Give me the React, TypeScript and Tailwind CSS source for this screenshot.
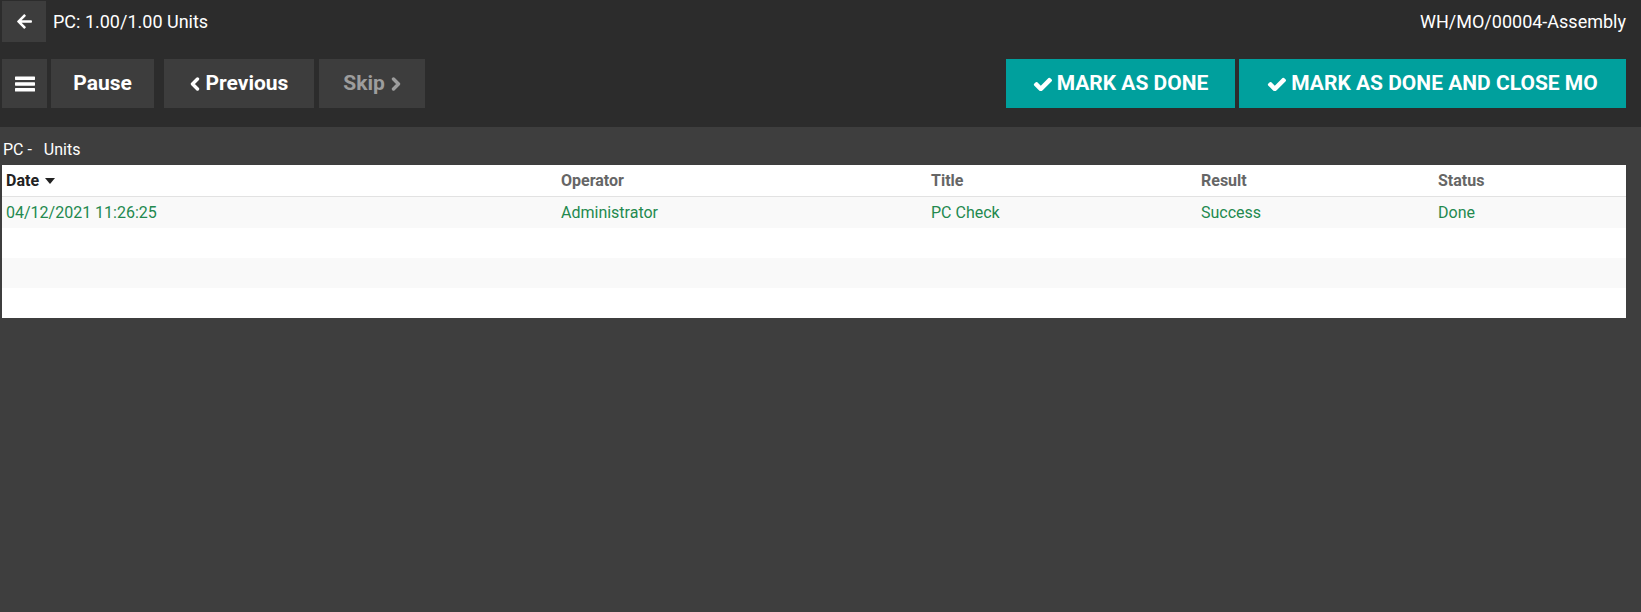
import { FaArrowLeft } from 'react-icons/fa';

const rows = [
  { date: '04/12/2021 11:26:25', operator: 'Administrator', title: 'PC Check', result: 'Success', status: 'Done' },
  null,
  null,
  null,
];

function Bars() {
  return (
    <svg width="20" height="16" viewBox="0 0 20 16" fill="currentColor">
      <rect x="0" y="0.5" width="20" height="3.4" rx="0.6" />
      <rect x="0" y="6.3" width="20" height="3.4" rx="0.6" />
      <rect x="0" y="12.1" width="20" height="3.4" rx="0.6" />
    </svg>
  );
}

// thick FA4-like chevrons
function Chevron({ dir }: { dir: 'left' | 'right' }) {
  return (
    <svg width="10" height="14" viewBox="0 0 10 14" fill="none" stroke="currentColor" strokeWidth="3.4" strokeLinecap="round" strokeLinejoin="round">
      {dir === 'left' ? <path d="M7.5 2L2.5 7l5 5" /> : <path d="M2.5 2l5 5-5 5" />}
    </svg>
  );
}

function Check() {
  return (
    <svg width="19" height="14" viewBox="49 300 1622 1150" fill="currentColor">
      <path d="M1671 566q0 40-28 68l-724 724-136 136q-28 28-68 28t-68-28l-136-136-362-362q-28-28-28-68t28-68l136-136q28-28 68-28t68 28l294 295 656-657q28-28 68-28t68 28l136 136q28 28 28 68z" />
    </svg>
  );
}

const cols = 'grid grid-cols-[555px_370px_270px_237px_1fr]';

export default function App() {
  return (
    <div className="min-h-[612px] bg-[#3e3e3e] font-['Roboto','Liberation_Sans',sans-serif] text-white">
      <div className="h-[127px] bg-[#2c2c2c] pl-[2px] pr-[15px] pt-[1px]">
        <div className="flex h-[41px] items-center justify-between">
          <div className="flex items-center">
            <button className="flex h-[41px] w-[44px] items-center justify-center bg-[#3d3d3d] text-white">
              <FaArrowLeft size={17} />
            </button>
            <span className="ml-[7px] text-[18px] leading-[21px]">PC: 1.00/1.00 Units</span>
          </div>
          <span className="text-[18px] leading-[21px]">WH/MO/00004-Assembly</span>
        </div>

        <div className="mt-[17px] flex h-[49px] items-stretch justify-between">
          <div className="flex items-stretch text-[21px] font-bold">
            <button className="flex w-[45px] items-center justify-center bg-[#3d3d3d]">
              <Bars />
            </button>
            <button className="ml-[4px] flex w-[103px] items-center justify-center bg-[#3d3d3d]">
              Pause
            </button>
            <button className="ml-[10px] flex w-[150px] items-center justify-center gap-[6px] bg-[#3d3d3d]">
              <Chevron dir="left" />
              <span>Previous</span>
            </button>
            <button className="ml-[5px] flex w-[106px] items-center justify-center gap-[6px] bg-[#3d3d3d] text-[#9d9d9d]">
              <span>Skip</span>
              <Chevron dir="right" />
            </button>
          </div>
          <div className="flex items-stretch text-[21px] font-bold">
            <button className="flex w-[229px] items-center justify-center gap-[5px] bg-[#00a09d]">
              <Check />
              <span>MARK AS DONE</span>
            </button>
            <button className="ml-[4px] flex w-[387px] items-center justify-center gap-[5px] bg-[#00a09d]">
              <Check />
              <span>MARK AS DONE AND CLOSE MO</span>
            </button>
          </div>
        </div>
      </div>

      <div className="pl-[2px] pr-[15px] pt-[13px]">
        <div className="pl-[1px] text-[16px] leading-[19px]">{'PC - \u00a0\u00a0Units'}</div>
        <div className="mt-[6px] bg-white text-[16px]">
          <div className={`${cols} h-[32px] items-center border-b border-[#e2e2e2] font-bold text-[#666] shadow-[0_1px_2px_rgba(0,0,0,0.08)]`}>
            <div className="flex items-center gap-[6px] pl-[4px] text-[#222]">
              Date
              <svg width="10" height="6" viewBox="0 0 10 6" fill="currentColor">
                <path d="M0 0h10L5 6z" />
              </svg>
            </div>
            <div className="pl-[4px]">Operator</div>
            <div className="pl-[4px]">Title</div>
            <div className="pl-[4px]">Result</div>
            <div className="pl-[4px]">Status</div>
          </div>
          {rows.map((r, i) => (
            <div
              key={i}
              className={`${cols} ${i === 0 ? 'h-[31px]' : 'h-[30px]'} items-center text-[#23894f] ${i % 2 === 0 ? 'bg-[#f9f9f9]' : 'bg-white'}`}
            >
              <div className="pl-[4px]">{r?.date}</div>
              <div className="pl-[4px]">{r?.operator}</div>
              <div className="pl-[4px]">{r?.title}</div>
              <div className="pl-[4px]">{r?.result}</div>
              <div className="pl-[4px]">{r?.status}</div>
            </div>
          ))}
        </div>
      </div>
    </div>
  );
}
